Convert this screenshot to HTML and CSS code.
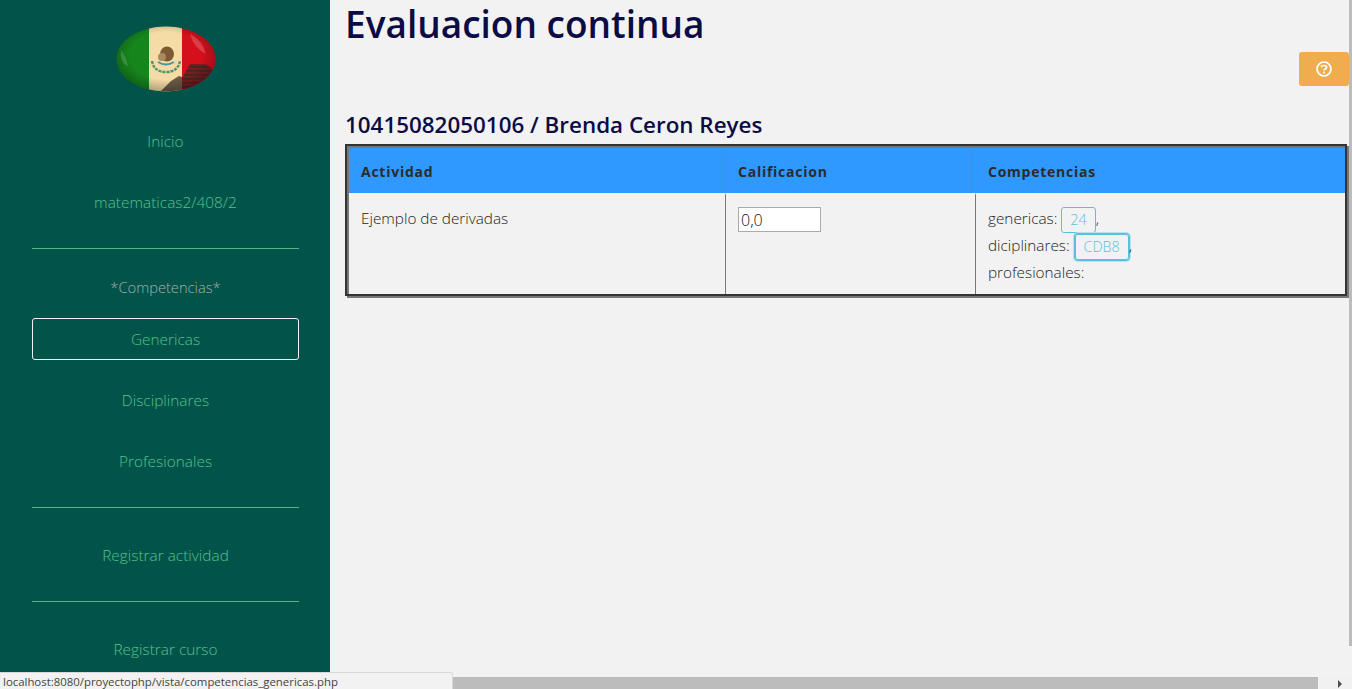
FILE: index.html
```html
<!DOCTYPE html>
<html lang="es">
<head>
<meta charset="utf-8">
<title>Evaluacion continua</title>
<link rel="stylesheet" href="styles.css">
</head>
<body>
<div class="page">
  <aside class="sidebar">
    <div class="logo">
      <svg width="100" height="66" viewBox="0 0 100 66">
        <defs>
          <clipPath id="oval"><ellipse cx="50" cy="33" rx="49.5" ry="32.5"/></clipPath>
          <radialGradient id="shade" cx=".5" cy=".45" r=".55">
            <stop offset=".65" stop-color="#000" stop-opacity="0"/>
            <stop offset="1" stop-color="#000" stop-opacity=".28"/>
          </radialGradient>
          <pattern id="steps" width="4" height="4" patternUnits="userSpaceOnUse">
            <rect width="4" height="4" fill="#7c1c20"/>
            <rect width="4" height="1.5" fill="#4a2224"/>
          </pattern>
        </defs>
        <g clip-path="url(#oval)">
          <rect x="0" y="0" width="33" height="66" fill="#16861c"/>
          <rect x="33" y="0" width="33" height="66" fill="#f5dca6"/>
          <rect x="66" y="0" width="34" height="66" fill="#d50f1c"/>
          <path d="M44 66 L55 55 L63 50 L66 51 V66 Z" fill="#6b5a48"/>
          <path d="M66 66 V52 L74 38 L90 38 L100 46 V66 Z" fill="url(#steps)"/>
          <path d="M74 8 Q86 13 90 28 Q78 22 74 8 Z" fill="#fff" opacity=".2"/>
          <path d="M5 24 Q10 30 12 40 Q3 36 5 24 Z" fill="#fff" opacity=".18"/>
          <rect x="0" y="0" width="100" height="66" fill="url(#shade)"/>
          <ellipse cx="51" cy="28" rx="7" ry="7.5" fill="#7d5a34"/>
          <ellipse cx="46" cy="31" rx="4" ry="4" fill="#a98a5c"/>
          <path d="M36 35 Q38 46 50 46 Q62 46 64 35" fill="none" stroke="#4a9478" stroke-width="2.4" stroke-dasharray="3 1"/>
          <path d="M42 36 Q50 41 58 36" fill="none" stroke="#3a9aa8" stroke-width="2"/>
        </g>
      </svg>
    </div>
    <nav class="menu">
      <a class="item">Inicio</a>
      <a class="item">matematicas2/408/2</a>
      <hr class="rule">
      <a class="item item-label">*Competencias*</a>
      <a class="item item-active">Genericas</a>
      <a class="item">Disciplinares</a>
      <a class="item">Profesionales</a>
      <hr class="rule">
      <a class="item">Registrar actividad</a>
      <hr class="rule">
      <a class="item">Registrar curso</a>
    </nav>
  </aside>
  <main class="content">
    <h1 class="title">Evaluacion continua</h1>
    <div class="toolbar">
      <button class="help" type="button" aria-label="Ayuda">
        <svg width="16" height="16" viewBox="0 0 16 16" fill="none" stroke="#fff">
          <circle cx="8" cy="8" r="7" stroke-width="1.7"/>
          <path d="M5.4 6.2 C5.6 3.9 10.6 3.9 10.6 6.3 C10.6 8 8 7.8 8 9.6" stroke-width="1.7"/>
          <path d="M8 10.8 V12.4" stroke-width="1.7"/>
        </svg>
      </button>
    </div>
    <h2 class="student">10415082050106 / Brenda Ceron Reyes</h2>
    <div class="frame">
      <table class="grid">
        <thead>
          <tr>
            <th class="col-a">Actividad</th>
            <th class="col-b">Calificacion</th>
            <th>Competencias</th>
          </tr>
        </thead>
        <tbody>
          <tr>
            <td>Ejemplo de derivadas</td>
            <td><input class="grade" type="text" value="0,0"></td>
            <td class="comp">
              <div class="comp-line">genericas: <a class="tag">24</a>,</div>
              <div class="comp-line">diciplinares: <a class="tag tag-focus">CDB8</a>,</div>
              <div class="comp-line">profesionales:</div>
            </td>
          </tr>
        </tbody>
      </table>
    </div>
  </main>
</div>
<div class="status">localhost:8080/proyectophp/vista/competencias_genericas.php</div>
<div class="hscroll">
  <div class="hthumb"></div>
  <div class="harrow"></div>
</div>
<div class="vscroll"></div>
</body>
</html>
```
FILE: styles.css
```css
* { box-sizing: border-box; }
html, body { margin: 0; height: 100%; overflow: hidden; }
body {
  background: #f2f2f2;
  color: #222;
  font-family: "Open Sans", sans-serif;
  font-weight: 300;
  font-size: 15.3px;
}
.page { display: flex; height: 689px; }
.sidebar {
  width: 330px;
  flex: none;
  background: #02544a;
  padding: 26px 31px 0 32px;
}
.logo { display: flex; justify-content: center; height: 66px; margin-bottom: 29px; }
.menu { display: flex; flex-direction: column; }
.item {
  display: block;
  height: 42px;
  line-height: 40px;
  margin-bottom: 19px;
  text-align: center;
  color: #55c08c;
  border: 1px solid transparent;
  font-size: 15.4px;
}
.item-label { color: #a3aeae; font-size: 14.7px; line-height: 38px; margin-top: -9px; margin-bottom: 9px; }
.item-active { border-color: #f2f2f2; border-radius: 3px; line-height: 42px; margin-bottom: 20px; }
.rule { width: 100%; height: 1px; margin: 5px 0 27px; border: 0; background: #4fb583; }
.content { flex: 1; min-width: 0; padding: 0 3px 0 15px; }
.title {
  margin: 0;
  font-size: 37px;
  line-height: 48px;
  font-weight: 600;
  color: #0b0b45;
}
.toolbar { display: flex; justify-content: flex-end; margin-top: 4px; height: 34px; }
.help {
  width: 50px;
  height: 34px;
  padding: 0;
  border: 0;
  border-radius: 3px;
  background: #f0ad4e;
  display: flex;
  align-items: center;
  justify-content: center;
}
.student {
  margin: 24px 0 4px;
  font-size: 22.4px;
  line-height: 30px;
  font-weight: 600;
  color: #0b0b45;
}
.frame {
  margin-right: 2px;
  padding: 2px 0 0 2px;
  border: 2px solid #333;
  background: #777;
  box-shadow: 2px 2px 0 #777;
}
.grid {
  width: 100%;
  table-layout: fixed;
  border-collapse: separate;
  border-spacing: 0;
  background: #f2f2f2;
}
.col-a { width: 377px; }
.col-b { width: 250px; }
.grid th {
  height: 45px;
  padding: 2px 12px 0;
  text-align: left;
  background: #3099ff;
  color: #2b2b2b;
  font-size: 14px;
  font-weight: 700;
  letter-spacing: .75px;
  border-right: 1px solid #7a8a99;
}
.grid th:last-child, .grid td:last-child { border-right: 0; }
.grid td {
  height: 101px;
  padding: 12px 12px 0;
  vertical-align: top;
  line-height: 22px;
  border-top: 2px solid #f2f2f2;
  border-right: 1px solid #777;
}
.grade {
  display: block;
  width: 83px;
  height: 25px;
  padding: 0 2px;
  border: 1px solid #aaa;
  background: #fff;
  color: #111;
  font-family: "Open Sans", sans-serif;
  font-weight: 300;
  font-size: 16px;
}
.grid td.comp { padding-top: 10px; }
.comp-line { height: 27px; line-height: 26px; white-space: nowrap; }
.tag {
  display: inline-block;
  height: 26px;
  line-height: 24px;
  padding: 0 8px;
  font-size: 14.3px;
  vertical-align: -1px;
  color: #5bc0de;
  border: 1px solid #5bc0de;
  border-radius: 3px;
}
.tag-focus { margin-left: 1px; box-shadow: 0 0 0 1px #5bc0de, 0 0 0 2px #b5e3ee; }
.status {
  position: absolute;
  left: 0;
  bottom: 0;
  z-index: 2;
  width: 453px;
  height: 17px;
  padding: 0 3px;
  background: #f2f2f2;
  border: 1px solid #d8d8d8;
  border-width: 1px 1px 0 0;
  border-top-right-radius: 3px;
  font-size: 11.4px;
  line-height: 17px;
  font-weight: 400;
  color: #444;
  white-space: nowrap;
}
.hscroll {
  position: absolute;
  left: 330px;
  right: 0;
  bottom: 0;
  height: 12px;
  display: flex;
  background: #f1f1f1;
}
.hthumb { width: 988px; background: #bcbcbc; }
.harrow {
  margin: 3px 0 0 20px;
  width: 0;
  height: 0;
  border-left: 4px solid #505050;
  border-top: 4px solid transparent;
  border-bottom: 4px solid transparent;
}
.vscroll {
  position: absolute;
  top: 0;
  right: 0;
  width: 3px;
  height: 646px;
  background: #bcbcbc;
}
```
